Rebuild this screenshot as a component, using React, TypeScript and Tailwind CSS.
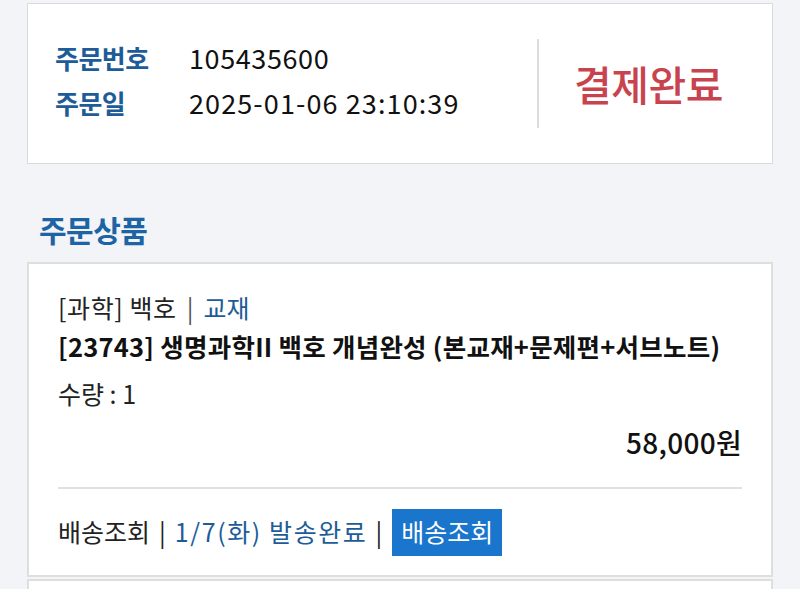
import React from "react";

const font = { fontFamily: '"Noto Sans CJK KR", "Noto Sans", sans-serif' };

export default function App() {
  return (
    <div className="h-[589px] w-[800px] bg-[#f3f4f8] px-[27px] pt-[3px] overflow-hidden" style={font}>
      <div className="flex h-[161px] items-center border border-[#dadada] bg-white">
        <div className="flex w-[509px] flex-col gap-[8px] pb-[7px] pl-[27px]">
          <div className="flex items-center leading-[37px]">
            <span className="w-[134px] text-[26px] font-bold tracking-[-0.5px] text-[#1d5c98]">주문번호</span>
            <span className="text-[27px] tracking-[0.6px] text-[#111]">105435600</span>
          </div>
          <div className="flex items-center leading-[37px]">
            <span className="w-[134px] text-[26px] font-bold tracking-[-0.5px] text-[#1d5c98]">주문일</span>
            <span className="text-[27px] tracking-[1.1px] text-[#111]">2025-01-06 23:10:39</span>
          </div>
        </div>
        <div className="h-[89px] w-[2px] bg-[#dcdcdc]" />
        <div className="flex flex-1 justify-center pr-[14px]">
          <span className="text-[41px] font-medium tracking-[-0.5px] text-[#c9434f]">결제완료</span>
        </div>
      </div>

      <div className="pl-[12px] pt-[44px] pb-[12px] text-[30px] font-bold leading-[42px] tracking-[-0.5px] text-[#1d64a4]">주문상품</div>

      <div className="border-2 border-[#dedede] bg-white px-[29px] pt-[23px]">
        <div className="flex items-center text-[25px] leading-[40px] text-[#222]">
          <span className="tracking-[0.6px]">[과학] 백호</span>
          <span className="ml-[10px] mr-[10px] text-[#555]">|</span>
          <span className="text-[#1d5c98]">교재</span>
        </div>
        <div className="text-[25.5px] font-bold leading-[38px] tracking-[0.25px] text-[#111]">
          [23743] 생명과학II 백호 개념완성 (본교재+문제편+서브노트)
        </div>
        <div className="mt-[8px] text-[25px] leading-[40px] text-[#222]">수량 : 1</div>
        <div className="mt-[9px] text-right text-[28px] font-medium leading-[40px] tracking-[0.3px] text-[#111]">58,000원</div>
        <div className="mt-[25px] h-[2px] bg-[#e0e0e0]" />
        <div className="flex h-[86px] items-center text-[25px] text-[#222]">
          <span>배송조회</span>
          <span className="mx-[9px]">|</span>
          <span className="tracking-[1.6px] text-[#1d5c98]">1/7(화) 발송완료</span>
          <span className="ml-[8px] mr-[10px]">|</span>
          <span className="flex h-[47px] w-[110px] items-center justify-center bg-[#1a75cc] text-white">배송조회</span>
        </div>
      </div>
      <div className="mt-[2px] h-[40px] border-2 border-[#dedede] bg-white" />
    </div>
  );
}
